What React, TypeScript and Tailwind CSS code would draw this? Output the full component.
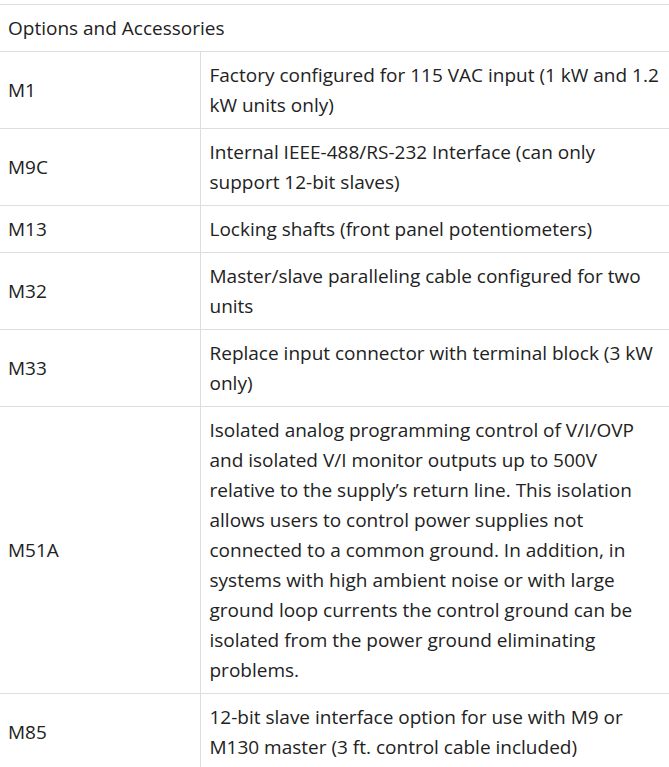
import React from "react";

const rows: [string, string][] = [
  ["M1", "Factory configured for 115 VAC input (1 kW and 1.2 kW units only)"],
  ["M9C", "Internal IEEE-488/RS-232 Interface (can only support 12-bit slaves)"],
  ["M13", "Locking shafts (front panel potentiometers)"],
  ["M32", "Master/slave paralleling cable configured for two units"],
  ["M33", "Replace input connector with terminal block (3 kW only)"],
  [
    "M51A",
    "Isolated analog programming control of V/I/OVP and isolated V/I monitor outputs up to 500V relative to the supply\u2019s return line. This isolation allows users to control power supplies not connected to a common ground. In addition, in systems with high ambient noise or with large ground loop currents the control ground can be isolated from the power ground eliminating problems.",
  ],
  ["M85", "12-bit slave interface option for use with M9 or M130 master (3 ft. control cable included)"],
];

export default function App() {
  return (
    <div className="bg-white w-[669px] pt-[4px] text-[#222] text-[19px] leading-[30px]" style={{ fontFamily: '"Open Sans", sans-serif' }}>
      <table className="w-full border-collapse">
        <tbody>
          <tr>
            <td colSpan={2} className="border-t border-[#ddd] px-[8px] py-[8px] align-middle">
              Options and Accessories
            </td>
          </tr>
          {rows.map(([a, b]) => (
            <tr key={a}>
              <td className="border-t border-[#ddd] w-[200px] px-[8px] py-[8px] align-middle">{a}</td>
              <td className="border-t border-l border-[#ddd] px-[9px] py-[8px] align-middle">{b}</td>
            </tr>
          ))}
        </tbody>
      </table>
    </div>
  );
}
